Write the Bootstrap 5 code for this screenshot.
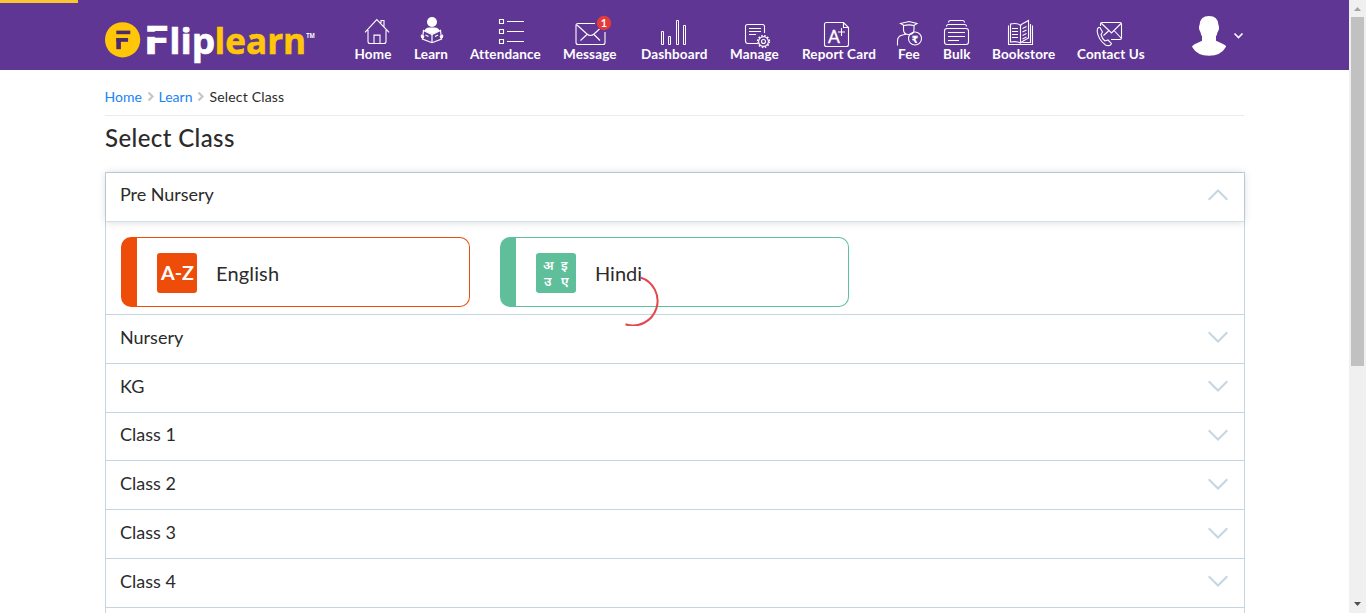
<!DOCTYPE html>
<html lang="en">
<head>
<meta charset="utf-8">
<meta name="viewport" content="width=device-width, initial-scale=1">
<title>Fliplearn - Select Class</title>
<link href="https://cdn.jsdelivr.net/npm/bootstrap@5.3.0/dist/css/bootstrap.min.css" rel="stylesheet">
<style>
body{font-family:Lato,"Liberation Sans",sans-serif;color:#2b2b2b;height:100vh;overflow:hidden}
.page-wrap{width:1140px;margin-left:105px}
.topbar{background:#603694;height:70px}
.load-bar{position:absolute;left:0;top:0;width:78px;height:3px;background:#fbc531}
.main-menu{gap:22px;margin-left:39.5px}
.menu-item{color:#fff;text-decoration:none;font-weight:700;font-size:13.5px;letter-spacing:.13px;line-height:16px;white-space:nowrap;padding-top:14px}
.menu-item svg{display:block;width:100%;height:33px;overflow:visible;fill:none;stroke:#fff;stroke-width:1.1}
.menu-item span{display:block;margin-top:-1px}
.crumbs{height:46px;font-size:14px;border-bottom:1px solid #e9ebee;padding-top:7px;width:1139px}
.crumbs a{color:#1a82f7;text-decoration:none}
.crumbs a.c-home,.crumbs a.c-learn{margin-left:-.4px}
.crumbs span{letter-spacing:.18px}
.page-title{font-size:24px;font-weight:500;letter-spacing:.4px;line-height:30px;margin:7px 0 19px}
.class-list{border:1px solid #c4d6e2;border-bottom:0;height:460px}
.class-row{height:48.8px;border-top:1px solid #c4d6e2;font-size:18px;padding:0 16px 3px 14px}
.class-row.opened{height:49px;border-top:0;border-bottom:1px solid #d3dfe7;box-shadow:0 0 8px rgba(0,0,0,.16);padding-bottom:5px}
.class-row svg{width:20px;height:12px;fill:none;stroke:#c4d6e2;stroke-width:2}
.class-row.opened span{letter-spacing:-.05px}
.subjects{height:92px;padding:15px 15px 0;gap:30px}
.subject{width:349px;height:70px;border:1px solid var(--tone);border-left-width:16px;border-radius:10px;font-size:20px;padding:2px 0 0 20px;gap:19px}
.subject-icon{width:40px;height:40px;background:var(--tone);border-radius:3px}
.tone-orange{--tone:#ee4c09}.tone-green{--tone:#5fbf9b}
.tone-orange span{letter-spacing:.15px}
.spinner-arc{position:absolute;left:609px;top:275px;width:50px;height:51px}
.scroll-track{width:17px;background:#f0f0f0}
.scroll-thumb{width:13px;height:349px;background:#c1c1c1}
</style>
</head>
<body class="d-flex bg-white">
<div class="flex-grow-1 overflow-hidden">
<header class="topbar">
<div class="load-bar"></div>
<div class="page-wrap d-flex h-100">
<a href="#" aria-label="Fliplearn"><svg width="210" height="70" viewBox="105 0 210 70" font-family="'Open Sans','Noto Sans',sans-serif" font-weight="700">
<circle cx="122.6" cy="39.8" r="17.6" fill="#ffc708"/>
<g fill="#4b2a6d"><rect x="116.3" y="30.6" width="14" height="3.6"/><rect x="116.3" y="38" width="11.8" height="3.8"/><rect x="116.3" y="38" width="4.6" height="11.2"/></g>
<text x="143.2" y="54.2" font-size="39" fill="#fff" stroke="#fff" stroke-width=".4" textLength="26" lengthAdjust="spacingAndGlyphs">F</text>
<rect x="145" y="31.8" width="24" height="5" fill="#603694"/>
<text x="169.3" y="53.6" font-size="36.5" fill="#fff" stroke="#fff" stroke-width=".6" textLength="46" lengthAdjust="spacingAndGlyphs">lip</text>
<text x="214.6" y="53.6" font-size="36.5" fill="#ffc708" stroke="#ffc708" stroke-width=".6" textLength="91.500" lengthAdjust="spacingAndGlyphs">learn</text>
<text x="306.200" y="38" font-size="7" fill="#fff" textLength="8.600" lengthAdjust="spacingAndGlyphs">TM</text>
</svg></a>
<nav class="main-menu d-flex">
<a class="menu-item" href="#" style="width:37.5px"><svg viewBox="354.5 14 37.5 33"><path d="M364.5 32.3 376.3 19.6 388.6 32.3M380.5 23V20.5h3v6M367.5 30v11.5q0 2 2 2h14q2 0 2-2V30M373.5 43.5v-8.4h6v8.4"/></svg><span>Home</span></a>
<a class="menu-item" href="#" style="width:34px"><svg viewBox="414 14 34 33"><circle cx="432" cy="22" r="5" fill="#fff" stroke="none"/><path fill="#fff" stroke="none" d="M424.5 31q1-3.5 4.500-3.500h6q3.500 0 4.500 3.500l-7.500 3z"/><path d="M423.500 30.500 432 34.500l8.500-4 1 8.500-9.500 3.700-9.500-3.700zM432 34.500v8M425.500 35l3 1.500M435 36.500l3-1.500" stroke-width="1.2"/><path fill="#fff" stroke="none" d="M421 34.500q2 0 3.500 2l-1.500 2.500q-3-1-2-4.500M443 34.500q-2 0-3.500 2l1.500 2.500q3-1 2-4.500"/></svg><span>Learn</span></a>
<a class="menu-item" href="#" style="width:71px"><svg viewBox="470 14 71 33"><path d="M499.500 19.500h4v4h-4zM499.500 29.500h4v4h-4zM499.500 39.500h4v4h-4zM507 21.500h17M507 31.500h17M507 41.500h17"/></svg><span>Attendance</span></a>
<a class="menu-item" href="#" style="width:56px"><svg viewBox="563 14 56 33"><path d="M595 23.500h-17q-2 0-2 2v17q0 2 2 2h25q2 0 2-2V32M577 25l10 9q3.500 3 7 0l5.500-5M580.500 40.500l7-6.500M593.500 34l6.500 6.500"/><circle cx="604" cy="23" r="7.200" fill="#e43b3b" stroke="none"/><text x="604" y="27" text-anchor="middle" font-size="11" fill="#fff" stroke="none">1</text></svg><span>Message</span></a>
<a class="menu-item" href="#" style="width:67px"><svg viewBox="641 14 67 33"><path stroke-width="1" d="M661.500 31.500h2v13h-2zM668.500 36.500h2v8h-2zM676.500 20.500h2v24h-2zM683.500 25.500h2v19h-2z"/></svg><span>Dashboard</span></a>
<a class="menu-item" href="#" style="width:50px"><svg viewBox="730 14 50 33"><path d="M757 43.500h-9q-2.500 0-2.500-2.500V26.500q0-2 2-2h15q2 0 2 2V33M749 28.500h12M749 31.500h12M749 34.500h7"/><circle cx="763.500" cy="41.500" r="4.900"/><circle cx="763.500" cy="41.500" r="5.900" stroke-width="1.500" stroke-dasharray="1.600 1.490"/><circle cx="763.500" cy="41.500" r="2"/></svg><span>Manage</span></a>
<a class="menu-item" href="#" style="width:74px"><svg viewBox="802 14 74 33"><path d="M843.500 22.500h-17q-2 0-2 2v20q0 2 2 2h20q2 0 2-2V27.500zv5h5M841.500 28v8M838 32h7"/><text x="828" y="43" font-size="17" font-weight="400" fill="#fff" stroke-width=".3" textLength="12" lengthAdjust="spacingAndGlyphs">A</text></svg><span>Report Card</span></a>
<a class="menu-item" href="#" style="width:23px"><svg viewBox="898 14 23 33"><path d="M900.500 23.500 909 21.500l8 2-3 2q-5-1.200-10 0zM903.500 25.500v4q0 5 5.300 5t5.200-5v-4M897.500 45.500V41q0-5 5-6l3.500-.7"/><circle cx="915" cy="38.500" r="6.500"/><text x="915" y="42.500" text-anchor="middle" font-size="10" font-family="'DejaVu Sans',sans-serif" fill="#fff" stroke="none">₹</text></svg><span>Fee</span></a>
<a class="menu-item" href="#" style="width:27px"><svg viewBox="943 14 27 33"><rect x="944.500" y="28.500" width="24" height="16" rx="2.500"/><path d="M948 32.500h17M948 36.500h17M948 40.500h11M946.500 26.500q0-2 2-2h16q2 0 2 2M948.500 22.500q0-2 2-2h12q2 0 2 2"/></svg><span>Bulk</span></a>
<a class="menu-item" href="#" style="width:63px"><svg viewBox="992 14 63 33"><path d="M1020.500 43V25.500q-3-3-10-1.500v18q7-1 10 1 1.500-1.500 8-5V20.500l-6 3.200q-2 1-2 2.500M1008.500 25.500v19h24v-19M1030.500 24v18.500h-8M1012 28.500h6M1012 31.500h6M1012 34.500h6M1012 37.500h6M1022.500 28.500l4-2M1022.500 32l4-2M1022.500 35.500l4-2M1022.500 39l4-2"/></svg><span>Bookstore</span></a>
<a class="menu-item" href="#" style="width:68px"><svg viewBox="1077 14 68 33"><path d="M1100.500 26v-2q0-1.500 1.500-1.500h18q1.500 0 1.500 1.500v14q0 1.500-1.500 1.500h-9M1101 23l10.500 10 10-10M1108.500 31l-5 4.500M1114.500 31l6.500 7"/><path d="M1098.500 27.500q-1.500 1-1.300 4 1 8 8.300 13.500 2.500 1.300 5 0l1-1.500-3.500-3.500-3 1q-3-2.500-4-6.500l1.500-2.500-2.500-4.500z"/></svg><span>Contact Us</span></a>
</nav>
<svg class="ms-auto me-0" width="56" height="70" viewBox="1189 0 56 70"><path fill="#fff" d="M1209 16q9 0 9.500 9 1.500 4-1 7.300-.5 3-1.500 4v4.500q4 1.500 7.500 3.500 3 1.500 2.500 2.500-5 9-17 9t-17-9q0-1 2.500-2.500 4-2 7.500-3.500v-4.500q-1-1-1.500-4-2.500-4-1-7.300.5-9 9.500-9z"/><path d="m1234.500 33.500 4 4 4-4" fill="none" stroke="#fff" stroke-width="1.600"/></svg>
</div>
</header>
<main class="page-wrap">
<div class="crumbs d-flex align-items-center"><a href="#" class="c-home">Home</a><svg width="17" height="12" fill="none" stroke="#c6c6c6" stroke-width="2.200"><path d="m6.500 2.500 4 4-4 4"/></svg><a href="#" class="c-learn">Learn</a><svg width="17" height="12" fill="none" stroke="#c6c6c6" stroke-width="2.200"><path d="m6.500 2.500 4 4-4 4"/></svg><span>Select Class</span></div>
<h1 class="page-title">Select Class</h1>
<div class="class-list">
<div class="class-row opened d-flex align-items-center justify-content-between"><span>Pre Nursery</span><svg viewBox="0 0 20 12"><path d="m.7 10.700 9.300-9.200 9.300 9.200"/></svg></div>
<div class="subjects d-flex">
<div class="subject tone-orange d-flex align-items-center"><div class="subject-icon"><svg class="d-block" width="40" height="40"><text x="4" y="27" font-size="19" font-weight="700" fill="#fff" textLength="33" lengthAdjust="spacingAndGlyphs">A-Z</text></svg></div><span>English</span></div>
<div class="subject tone-green d-flex align-items-center"><div class="subject-icon"><svg class="d-block" width="40" height="40" font-size="13" font-weight="600" fill="#fff" font-family="'Noto Sans','Noto Sans Devanagari',sans-serif"><text x="7" y="16.500">अ</text><text x="25" y="16.500">इ</text><text x="8" y="33">उ</text><text x="25" y="33">ए</text></svg></div><span>Hindi</span></div>
</div>
<div class="class-row d-flex align-items-center justify-content-between"><span>Nursery</span><svg viewBox="0 0 20 12"><path d="m.7 1.300 9.300 9.200 9.300-9.200"/></svg></div>
<div class="class-row d-flex align-items-center justify-content-between"><span>KG</span><svg viewBox="0 0 20 12"><path d="m.7 1.300 9.300 9.200 9.300-9.200"/></svg></div>
<div class="class-row d-flex align-items-center justify-content-between"><span>Class 1</span><svg viewBox="0 0 20 12"><path d="m.7 1.300 9.300 9.200 9.300-9.200"/></svg></div>
<div class="class-row d-flex align-items-center justify-content-between"><span>Class 2</span><svg viewBox="0 0 20 12"><path d="m.7 1.300 9.300 9.200 9.300-9.200"/></svg></div>
<div class="class-row d-flex align-items-center justify-content-between"><span>Class 3</span><svg viewBox="0 0 20 12"><path d="m.7 1.300 9.300 9.200 9.300-9.200"/></svg></div>
<div class="class-row d-flex align-items-center justify-content-between"><span>Class 4</span><svg viewBox="0 0 20 12"><path d="m.7 1.300 9.300 9.200 9.300-9.200"/></svg></div>
<div class="class-row"></div>
</div>
</main>
</div>
<aside class="scroll-track flex-shrink-0 d-flex flex-column align-items-center">
<svg width="17" height="17"><path d="m5 11 3.500-4 3.500 4z" fill="#a3a3a3"/></svg><div class="scroll-thumb"></div><svg class="mt-auto" width="17" height="17"><path d="m5 6 3.500 4L12 6z" fill="#505050"/></svg>
</aside>
<svg class="spinner-arc" viewBox="609 275 50 51" fill="none" stroke="#e2484d" stroke-width="2"><path d="M640.500 277.500A24.300 24.300 0 0 1 625.500 324.300"/></svg>
<script src="https://cdn.jsdelivr.net/npm/bootstrap@5.3.0/dist/js/bootstrap.bundle.min.js"></script>
</body>
</html>
